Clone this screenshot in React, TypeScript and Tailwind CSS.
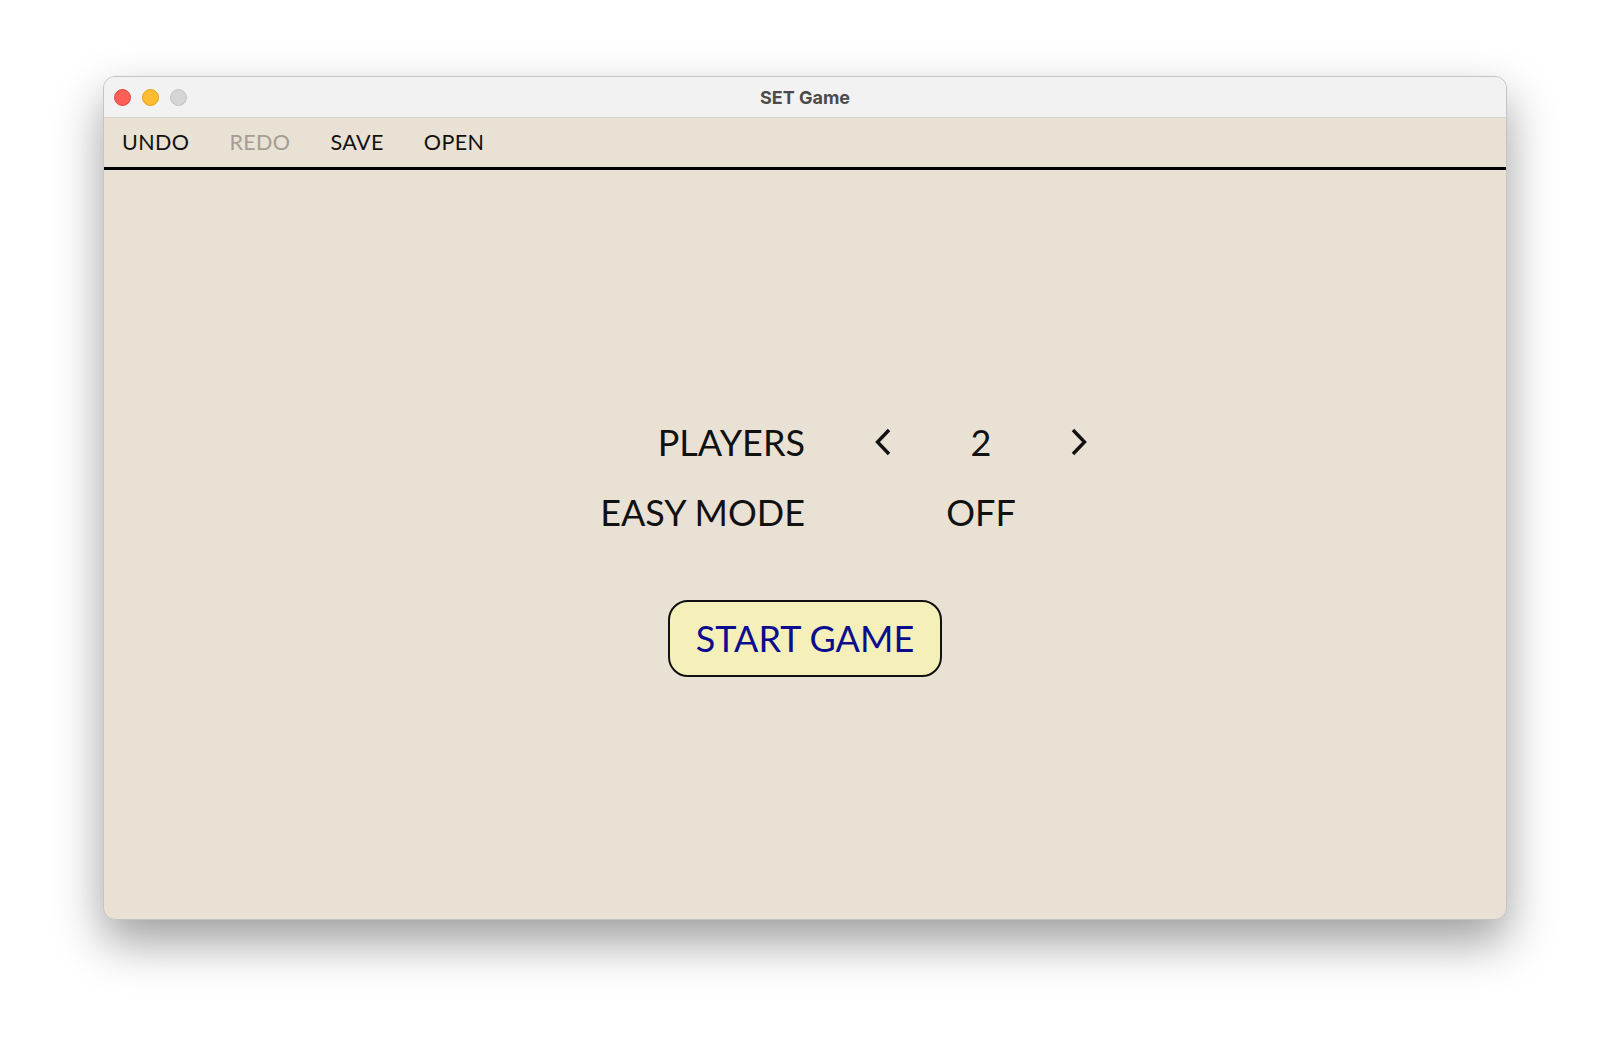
import React, { useState } from 'react';

const Chevron = ({ dir }: { dir: 'left' | 'right' }) => (
  <svg width="20" height="28" viewBox="0 0 20 28" fill="none" className="block">
    <path
      d={dir === 'left' ? 'M16 2 L4.5 14 L16 26' : 'M4 2 L15.5 14 L4 26'}
      stroke="#111"
      strokeWidth="3.4"
      strokeLinecap="butt"
      strokeLinejoin="miter"
    />
  </svg>
);

export default function App() {
  const [players, setPlayers] = useState(2);
  const [easy, setEasy] = useState(false);

  const font = { fontFamily: 'Lato, "Noto Sans", sans-serif' };

  return (
    <div className="w-[1610px] h-[1048px] bg-white pt-[76px] pl-[103px]">
      <div className="w-[1404px] h-[844px] flex flex-col rounded-[12px] overflow-hidden border border-[#c6c4c2] shadow-[0_22px_48px_rgba(0,0,0,0.38)] bg-[#e9e1d3]">
        {/* title bar */}
        <div className="h-[41px] shrink-0 bg-[#f3f2f2] border-b border-[#d9d3ca] flex items-center relative">
          <div className="flex items-center gap-[11px] pl-[10px]">
            <span className="w-[17px] h-[17px] rounded-full bg-[#fe5f57] border border-[#e2463f]" />
            <span className="w-[17px] h-[17px] rounded-full bg-[#febc2e] border border-[#e1a116]" />
            <span className="w-[17px] h-[17px] rounded-full bg-[#d6d5d5] border border-[#c4c3c3]" />
          </div>
          <div
            className="absolute inset-0 flex items-center justify-center text-[18px] font-bold text-[#4b4b4b] pointer-events-none"
            style={{ fontFamily: 'Inter, "Liberation Sans", sans-serif' }}
          >
            SET Game
          </div>
        </div>

        {/* menu bar */}
        <div
          className="h-[52px] shrink-0 flex items-center pl-[18px] gap-[40px] border-b-[3px] border-black text-[21.5px] tracking-[0.4px] text-[#111]"
          style={font}
        >
          <button className="text-[#111]">UNDO</button>
          <button className="text-[#a39d95]">REDO</button>
          <button className="text-[#111]">SAVE</button>
          <button className="text-[#111]">OPEN</button>
        </div>

        {/* content */}
        <div className="flex-1 flex flex-col items-center justify-center pb-[6px] text-[#111]" style={font}>
          <div className="flex items-center h-[70px] text-[36px]">
            <div className="w-[323px] text-right">PLAYERS</div>
            <div className="w-[323px] flex items-center pl-[29px]">
              <button
                className="w-[98px] flex justify-center"
                onClick={() => setPlayers(Math.max(1, players - 1))}
              >
                <Chevron dir="left" />
              </button>
              <div className="w-[98px] text-center">{players}</div>
              <button className="w-[98px] flex justify-center" onClick={() => setPlayers(players + 1)}>
                <Chevron dir="right" />
              </button>
            </div>
          </div>
          <div className="flex items-center h-[70px] text-[36px]">
            <div className="w-[323px] text-right">EASY MODE</div>
            <div className="w-[323px] flex items-center pl-[29px]">
              <div className="w-[98px]" />
              <button className="w-[98px] text-center" onClick={() => setEasy(!easy)}>
                {easy ? 'ON' : 'OFF'}
              </button>
              <div className="w-[98px]" />
            </div>
          </div>
          <button className="mt-[53px] w-[274px] h-[77px] rounded-[20px] border-[2.5px] border-[#111] bg-[#f5f0b9] text-[36px] text-[#0c0c8e] flex items-center justify-center">
            START GAME
          </button>
        </div>
      </div>
    </div>
  );
}
